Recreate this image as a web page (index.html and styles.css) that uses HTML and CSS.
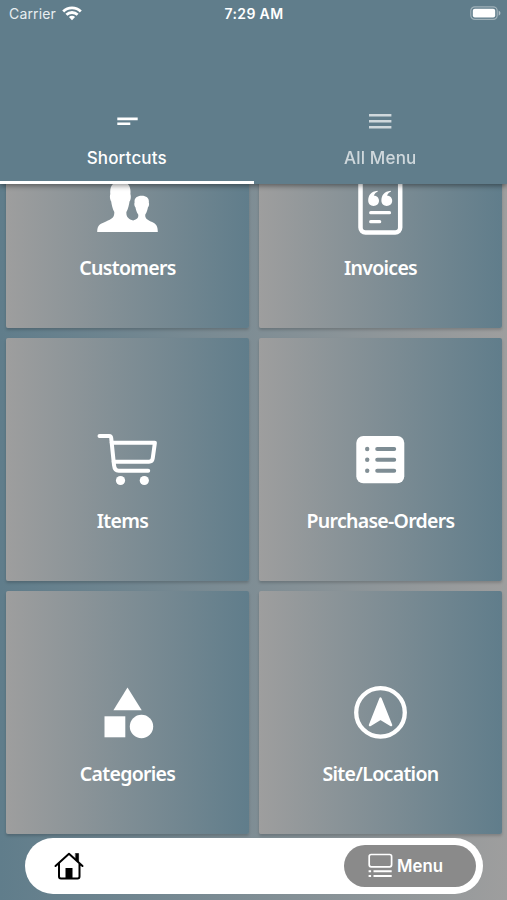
FILE: index.html
```html
<!DOCTYPE html>
<html lang="en">
<head>
<meta charset="utf-8">
<title>Shortcuts</title>
<link rel="stylesheet" href="styles.css">
</head>
<body>
<div class="app">
  <header class="header">
    <div class="status">
      <span class="carrier">Carrier
        <svg width="20" height="15" viewBox="0 0 20 15" fill="none" stroke="#fff" stroke-width="2.8"><path d="M1.200 5.400a12.500 12.500 0 0 1 17.600 0M4.400 8.800a8 8 0 0 1 11.200 0"/><path d="M10 14.200 6.900 11a4.400 4.400 0 0 1 6.200 0Z" fill="#fff" stroke="none"/></svg>
      </span>
      <span class="time">7:29 AM</span>
      <svg class="battery" width="31" height="15" viewBox="0 0 31 15"><rect x=".8" y=".8" width="26.4" height="12.6" rx="4" fill="none" stroke="#fff" stroke-opacity=".4" stroke-width="1.2"/><rect x="2.8" y="2.8" width="22.4" height="8.7" rx="2" fill="#fff"/><path d="M28.7 4.500q1.800 1 1.800 2.600t-1.800 2.600Z" fill="#fff" fill-opacity=".5"/></svg>
    </div>
    <nav class="tabs">
      <div class="tab active">
        <svg width="28" height="28" viewBox="0 0 28 28" stroke="#fff" stroke-width="2.6"><path d="M4.300 11.900h20.400M4.300 16.700h13"/></svg>
        <span>Shortcuts</span>
      </div>
      <div class="tab">
        <svg width="28" height="28" viewBox="0 0 28 28" stroke="#fff" stroke-width="2.4"><path d="M3 8.200h22.400M3 14.300h22.400M3 20.300h22.400"/></svg>
        <span>All Menu</span>
      </div>
    </nav>
  </header>
  <main class="content">
    <div class="grid">
      <div class="tile">
        <svg class="icon" viewBox="0 0 64 64" fill="#fff"><path d="M1.200 57C1.200 50 4 49 10 46.500C16 44 18.500 42.500 18.300 37C16.500 34 15.500 29 15.200 26.500C14 25 13.500 21 14.300 19C13.500 11 17 6.500 24.400 6.500C31.800 6.500 35.200 11 34.400 19C35.200 21 34.800 25 33.500 26.500C33.200 29 32.200 34 30.400 37C30 42 32.500 44 37.200 45.600C41.700 44 42.700 42.500 42.200 39.500C40.500 37 39.800 34.500 39.500 32.500C38.300 31 38 29 38.600 27.500C38 23.500 40.500 20.700 45.700 20.700C50.900 20.700 53.400 23.500 52.800 27.500C53.400 29 53.100 31 51.900 32.500C51.600 34.500 50.900 37 49.300 39.500C48.800 43.500 51.500 44.500 55.500 46.800C60 49 61.800 50.500 61.800 57Z"/></svg>
        <span>Customers</span>
      </div>
      <div class="tile">
        <svg class="icon" viewBox="0 0 64 64" fill="none" stroke="#fff" stroke-linecap="round"><rect x="11.500" y="4" width="39.700" height="53.500" rx="5" stroke-width="4.500"/><path d="M21.700 37.700h18.800M21.700 46.700h9" stroke-width="3.200"/><path id="quote" d="M28.500 15.800C22 16.500 19.200 20.500 19.200 25.500C19.200 28.800 21.500 30.900 24.500 30.900C27.800 30.900 30 28.500 30 25.700C30 22.700 27.800 20.700 24.800 20.500C25.700 18.500 27 17.500 28.700 16.800Z" fill="#fff" stroke="none"/><use href="#quote" x="13.200"/></svg>
        <span>Invoices</span>
      </div>
      <div class="tile">
        <svg class="icon" viewBox="0 0 64 64" fill="none" stroke="#fff" stroke-width="4" stroke-linecap="round" stroke-linejoin="round"><path d="M3.500 8H13.200Q15 8 15.200 10L18 37Q18.600 42.700 22.700 42.700H52.200"/><path d="M15.700 14.700H58.900L56.700 30.500Q56.200 33.700 53 33.700H17.700"/><g fill="#fff" stroke="none"><circle cx="24.500" cy="52.500" r="4.600"/><circle cx="48.300" cy="52.500" r="4.600"/></g></svg>
        <span class="nudge">Items</span>
      </div>
      <div class="tile">
        <svg class="icon" viewBox="0 0 64 64"><mask id="rows"><rect width="64" height="64" fill="#fff"/><path d="M28.200 21h17M28.200 31.800h17M28.200 42.700h17" stroke="#000" stroke-width="4" stroke-linecap="round"/><circle cx="18.200" cy="21" r="2.200"/><circle cx="18.200" cy="31.800" r="2.200"/><circle cx="18.200" cy="42.700" r="2.200"/></mask><rect x="7.300" y="8" width="48" height="47.300" rx="7" fill="#fff" mask="url(#rows)"/></svg>
        <span>Purchase-Orders</span>
      </div>
      <div class="tile">
        <svg class="icon" viewBox="0 0 64 64" fill="#fff"><path d="M31.500 6.500 45.700 29.300H17.400Z"/><rect x="8.500" y="35.300" width="20.800" height="21"/><circle cx="45.500" cy="45.500" r="11.700"/></svg>
        <span>Categories</span>
      </div>
      <div class="tile">
        <svg class="icon" viewBox="0 0 64 64"><circle cx="31.500" cy="31.400" r="24.300" fill="none" stroke="#fff" stroke-width="4.300"/><path d="M31.500 17.500 42.200 44.200 31.500 37.800 20.900 44.200Z" fill="#fff" stroke="#fff" stroke-width="2.200" stroke-linejoin="round"/></svg>
        <span>Site/Location</span>
      </div>
    </div>
  </main>
  <footer class="dock">
    <svg class="home" width="30" height="29" viewBox="0 0 30 29" fill="none" stroke="#000" stroke-width="2" stroke-linejoin="round" stroke-linecap="round"><path d="M1.500 14 15 1.800 28.500 14M5 11.500V24.500Q5 26.500 7 26.500H23.500Q25.500 26.500 25.500 24.500V11.500"/><path d="M11.500 16h7v10.500h-7Z" fill="#000" stroke="none"/><path d="M21.700 1.500h2.900v8.500L21.700 7.500Z" fill="#000" stroke-width=".6"/></svg>
    <div class="menu">
      <svg width="25" height="26" viewBox="0 0 25 26" fill="none" stroke="#fff" stroke-width="1.700"><rect x="1.200" y="1.500" width="22.400" height="12.300" rx="2"/><path d="M5.500 18.300h18.200M5.500 23h18.200M.6 18.300h2.500M.6 23h2.500" stroke-width="2"/></svg>
      <span>Menu</span>
    </div>
  </footer>
</div>
</body>
</html>
```
FILE: styles.css
```css
* { box-sizing: border-box; }
body { margin: 0; font-family: Inter, "Liberation Sans", sans-serif; color: #fff; }
.app {
  position: relative;
  display: flex;
  flex-direction: column;
  width: 507px;
  height: 900px;
  overflow: hidden;
  background: linear-gradient(90deg, #607d8b, #9e9e9e);
}
.header {
  z-index: 1;
  display: flex;
  flex: 0 0 184px;
  flex-direction: column;
  justify-content: space-between;
  background: #607d8b;
  box-shadow: 0 2px 5px rgba(0, 0, 0, .4);
}
.status {
  display: grid;
  grid-template-columns: 1fr auto 1fr;
  align-items: center;
  height: 27px;
  padding: 0 6px 0 9px;
  font-size: 14px;
}
.carrier { display: flex; align-items: center; gap: 6px; color: #e8eef1; letter-spacing: .15px; }
.carrier svg { margin-top: -1px; }
.time { padding-right: 2px; font-weight: 600; letter-spacing: .35px; }
.battery { justify-self: end; }
.tabs { display: flex; height: 84px; }
.tab {
  display: flex;
  flex: 1;
  flex-direction: column;
  align-items: center;
  gap: 13px;
  padding-top: 7px;
  border-bottom: 3px solid transparent;
  font-size: 17px;
  font-weight: 500;
  line-height: 20px;
  letter-spacing: .15px;
}
.tab > * { opacity: .7; }
.tab.active { border-color: #fff; }
.tab.active > * { opacity: 1; }
.content { flex: 1; overflow: hidden; }
.grid {
  display: grid;
  grid-template-columns: 243px 243px;
  grid-auto-rows: 243px;
  gap: 10px;
  margin: -99px 0 0 6px;
}
.tile {
  display: flex;
  flex-direction: column;
  align-items: center;
  gap: 15px;
  padding-top: 90px;
  border-radius: 2px;
  background: linear-gradient(90deg, #9e9e9e, #607d8b);
  box-shadow: 0 2px 3px rgba(0, 0, 0, .18);
  font-family: "Noto Sans", sans-serif;
  font-size: 19.500px;
  font-weight: 600;
  line-height: 28px;
  letter-spacing: -.7px;
}
.icon { width: 64px; height: 64px; }
.nudge { margin-right: 10px; }
.dock {
  position: absolute;
  left: 25px;
  bottom: 6px;
  z-index: 1;
  display: flex;
  align-items: center;
  justify-content: space-between;
  width: 458px;
  height: 56px;
  padding: 0 7px 0 29px;
  border-radius: 28px;
  background: #fff;
}
.menu {
  display: flex;
  align-items: center;
  gap: 4px;
  width: 132px;
  height: 42px;
  padding-left: 24px;
  border-radius: 21px;
  background: #8a8a8a;
  font-size: 16.800px;
  font-weight: 600;
}
```
